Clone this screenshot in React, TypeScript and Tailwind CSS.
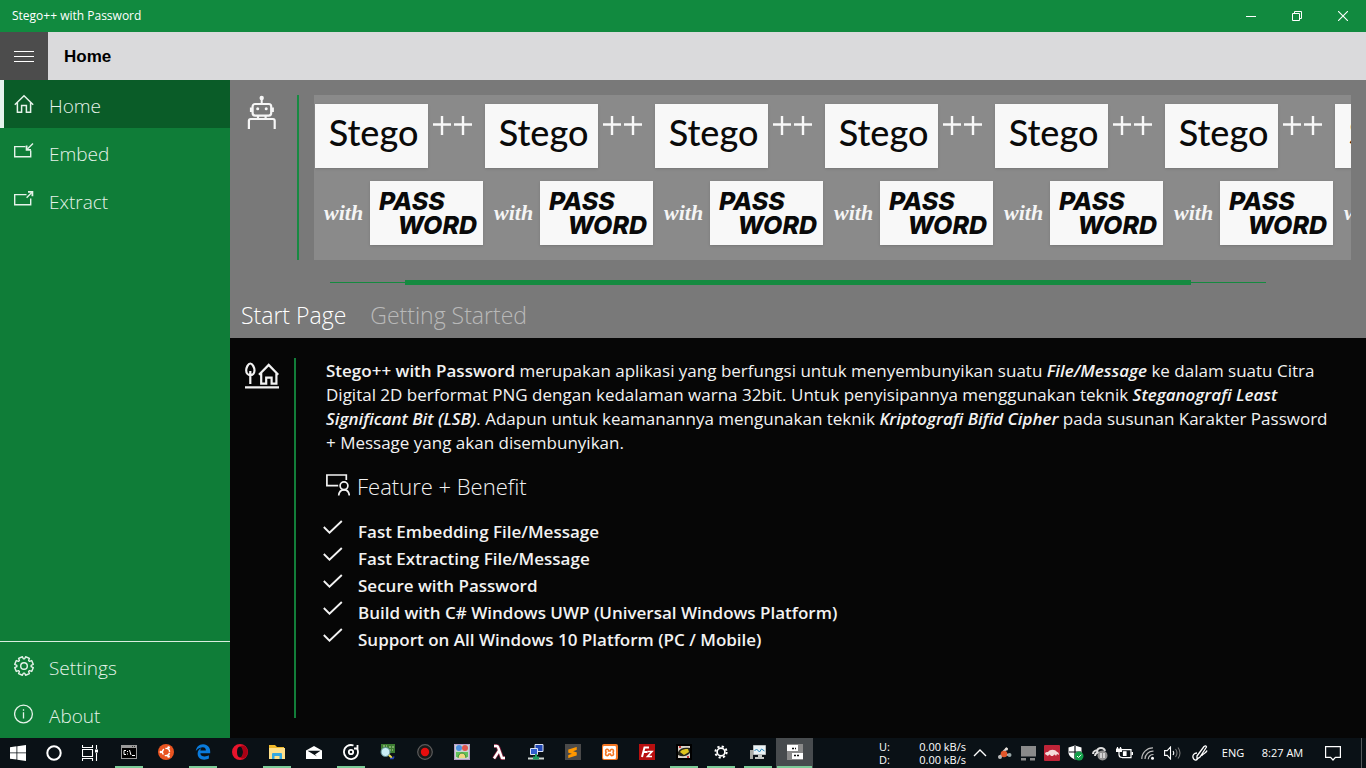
import React from "react";
import { SiXampp, SiSublimetext } from "react-icons/si";
import { FaEdgeLegacy } from "react-icons/fa6";

type IconProps = { children: React.ReactNode; w: number; h: number; sw?: number; className?: string };

function Icon({ children, w, h, sw = 1.3, className = "" }: IconProps) {
  return (
    <svg
      width={w}
      height={h}
      viewBox={`0 0 ${w} ${h}`}
      fill="none"
      stroke="currentColor"
      strokeWidth={sw}
      aria-hidden="true"
      className={`shrink-0 ${className}`}
    >
      {children}
    </svg>
  );
}

const HomeIcon = () => (
  <Icon w={20} h={20} sw={1.5}>
    <path d="M.8 10.700 10 1.700l9.200 9M3.400 8.500v9.800h4.200v-6.800h4.800v6.800h4.200V8.500" />
  </Icon>
);

const EmbedIcon = () => (
  <Icon w={20} h={20} sw={1.4}>
    <path d="M11.500 4.600H.7v10.200h16V8.500M19 1.500l-5.600 5.600" />
    <path d="M12.600 3.500v4.400H17" strokeWidth={1.8} />
  </Icon>
);

const ExtractIcon = () => (
  <Icon w={20} h={20} sw={1.4}>
    <path d="M12.500 4.600H.7v10.200h16V8.500M12.600 7.700 18 2.300" />
    <path d="M14 1.900h4.400v4.400" strokeWidth={1.8} />
  </Icon>
);

const SettingsIcon = () => {
  const teeth = 8;
  const pts: string[] = [];
  for (let i = 0; i < teeth; i++) {
    const a = (i * 2 * Math.PI) / teeth - Math.PI / 2 + Math.PI / 8;
    const seq: [number, number][] = [
      [-0.3, 7.2],
      [-0.22, 9.4],
      [0.22, 9.4],
      [0.3, 7.2],
    ];
    seq.forEach(([d, r]) => pts.push(`${(10 + r * Math.cos(a + d)).toFixed(2)},${(10 + r * Math.sin(a + d)).toFixed(2)}`));
  }
  return (
    <Icon w={20} h={20} sw={1.4}>
      <polygon points={pts.join(" ")} strokeLinejoin="round" />
      <circle cx="10" cy="10" r="3.3" />
    </Icon>
  );
};

const AboutIcon = () => (
  <Icon w={20} h={20} sw={1.3}>
    <circle cx="9.5" cy="10" r="8.9" />
    <path d="M9.500 8.200v6.300M9.500 5.200v1.600" />
  </Icon>
);

const RobotIcon = () => (
  <Icon w={30} h={34} sw={2.200} className="text-[#f6f6f6]">
    <circle cx="14.700" cy="3" r="2.200" fill="currentColor" stroke="none" />
    <path d="M14.700 4v5" strokeWidth={2} />
    <rect x="5.600" y="9" width="18.600" height="11.600" rx="2.500" />
    <path d="M4 12.500v4.600M25.800 12.500v4.600M11 21v3M18.600 21v3" />
    <circle cx="10.700" cy="13.700" r="1.500" fill="currentColor" stroke="none" />
    <circle cx="19.200" cy="13.700" r="1.500" fill="currentColor" stroke="none" />
    <path d="M1.900 34v-8.200q0-1.800 1.800-1.800h22.200q1.800 0 1.800 1.800V34" />
  </Icon>
);

const VillageIcon = () => (
  <Icon w={34} h={28} sw={2.200} className="text-[#f2f2f2]">
    <path d="M5.300 1.500C3.200 1.500 1.200 5.400 1.200 8.600c0 2.600 1.900 4.600 4.100 4.600s4.200-2 4.200-4.600c0-3.200-2.100-7.100-4.200-7.100ZM5.300 9v13" />
    <path d="m14 12.800 9.700-9.900 9.600 9.900M16.200 11v10.600h5V15.600h5.400v6h4.800V11" />
    <path d="M0 25.400h34" strokeWidth={2.4} />
  </Icon>
);

const FeatureIcon = () => (
  <Icon w={24} h={22} sw={1.7}>
    <path d="M20.300 6V1H.9v10.700h11.300" />
    <circle cx="18" cy="11.800" r="3.900" />
    <path d="M12.700 21.500c.3-3.300 2.200-5.700 5.300-5.700s5 2.400 5.300 5.700" />
  </Icon>
);

const CheckIcon = () => (
  <Icon w={20} h={14} sw={1.9}>
    <path d="m.8 7 5.700 5.700L18.800 1" />
  </Icon>
);

function NavItem({ icon, label, active = false }: { icon: React.ReactNode; label: string; active?: boolean }) {
  return (
    <a
      href="#"
      aria-current={active ? "page" : undefined}
      className={`flex h-12 items-center border-l-4 pl-[10px] text-[19px] font-[350] text-[#e6f3ea] ${
        active ? "border-[#e6f3ee] bg-[#0a5c28]" : "border-transparent"
      }`}
    >
      {icon}
      <span className="mt-1 ml-[15px]">{label}</span>
    </a>
  );
}

function LogoTile() {
  return (
    <div className="flex h-[165px] w-[170px] shrink-0 flex-col gap-[13px] pt-[9px]">
      <div className="flex h-16 gap-1 pl-px">
        <div className="flex w-[113px] shrink-0 items-center justify-center bg-[#f8f8f8] pb-2 pl-1 font-['Lato'] text-4xl leading-none font-medium text-[#0a0a0a] shadow-sm">
          Stego
        </div>
        <svg width="42" height="40" viewBox="0 0 42 40" stroke="#f8f8f8" strokeWidth="2.4" aria-label="++" className="shrink-0">
          <path d="M1 20.500h18M10 12v19M22 20.500h18M31 12v19" />
        </svg>
      </div>
      <div className="flex h-16 justify-end pr-px">
        <div className="flex w-[46px] items-center font-['Liberation_Serif'] text-[22px] leading-none font-bold text-[#f4f4f4] italic">
          with
        </div>
        <div className="flex w-[113px] shrink-0 flex-col justify-center bg-[#f8f8f8] pr-[6px] pl-[9px] font-['Inter'] text-[25px] leading-6 font-extrabold text-[#0a0a0a] italic shadow-sm">
          <span>PASS</span>
          <span className="text-right">WORD</span>
        </div>
      </div>
    </div>
  );
}

const features = [
  "Fast Embedding File/Message",
  "Fast Extracting File/Message",
  "Secure with Password",
  "Build with C# Windows UWP (Universal Windows Platform)",
  "Support on All Windows 10 Platform (PC / Mobile)",
];

const apps: { name: string; open?: boolean; active?: boolean; icon: React.ReactNode }[] = [
  {
    name: "Command Prompt",
    open: true,
    icon: (
      <svg width="16" height="14" viewBox="0 0 16 14">
        <rect width="16" height="14" fill="#9a9a9a" />
        <rect x="1" y="3" width="14" height="10" fill="#000" />
        <path d="M11 1.500h1M13 1.500h1" stroke="#333" />
        <path d="M5 5.500H3v4h2M6.500 6v1M6.500 8.500v1M8.500 5l1.500 5M11 10.500h3" stroke="#fff" fill="none" />
      </svg>
    ),
  },
  {
    name: "Ubuntu",
    icon: (
      <svg width="16" height="16" viewBox="0 0 16 16">
        <circle cx="8" cy="8" r="8" fill="#e95420" />
        <circle cx="8" cy="8" r="3.600" fill="none" stroke="#fff" strokeWidth="1.400" strokeDasharray="6 1.540" strokeDashoffset="-.8" />
        <circle cx="2.900" cy="8" r="1.300" fill="#fff" />
        <circle cx="10.600" cy="3.500" r="1.300" fill="#fff" />
        <circle cx="10.600" cy="12.500" r="1.300" fill="#fff" />
      </svg>
    ),
  },
  { name: "Edge", open: true, icon: <FaEdgeLegacy size={16} color="#0a7bdc" /> },
  {
    name: "Opera",
    icon: (
      <svg width="16" height="16" viewBox="0 0 16 16">
        <path fillRule="evenodd" fill="#e8142c" d="M8 0a8 8 0 1 0 0 16A8 8 0 0 0 8 0Zm0 2.500c1.900 0 3 2.400 3 5.500s-1.100 5.500-3 5.500S5 11.100 5 8s1.100-5.500 3-5.500Z" />
        <path fill="#a70014" d="M8 2.500C10 1 12.500 1.300 14 3.200A8 8 0 0 1 14 12.800c-1.500 1.900-4 2.200-6 .7 1.900 0 3-2.400 3-5.500S9.900 2.500 8 2.500Z" />
      </svg>
    ),
  },
  {
    name: "File Explorer",
    open: true,
    icon: (
      <svg width="16" height="14" viewBox="0 0 16 14">
        <path d="M0 0h6l2 2h7v3H0z" fill="#f0b92a" />
        <path d="M0 3h16v11H0z" fill="#ffe08a" />
        <path d="M3 14V9q0-1 1-1h8q1 0 1 1v5h-2.500v-3h-5v3z" fill="#35a8e0" />
      </svg>
    ),
  },
  {
    name: "Mail",
    icon: (
      <svg width="16" height="13" viewBox="0 0 16 13">
        <path d="M0 4.500 8 0l8 4.500V13H0z" fill="#fff" />
        <path d="M1.500 4.700h13L9 8.500l2 2z" fill="#0b1116" />
      </svg>
    ),
  },
  {
    name: "Groove Music",
    open: true,
    icon: (
      <svg width="16" height="16" viewBox="0 0 16 16" fill="none" stroke="#fff" strokeWidth="1.800">
        <path d="M14 4.500A7 7 0 1 1 10.500 1.500M14.500 1v3.500H11" />
        <circle cx="8" cy="8" r="2.200" />
      </svg>
    ),
  },
  {
    name: "System Viewer",
    icon: (
      <svg width="16" height="16" viewBox="0 0 16 16">
        <path d="M1 0h14v9H1z" fill="#3d7d32" />
        <path d="M3 2h4M9 3h5M9 6h4" stroke="#b9d59b" strokeDasharray="2 1" />
        <circle cx="5.500" cy="8" r="4.500" fill="#c9eef5" stroke="#5b8b92" />
        <path d="m9 11 3 3" stroke="#f0e04a" strokeWidth="2" />
        <path d="M10 14.500h3l1-2" stroke="#2946b8" strokeWidth="1.500" fill="none" />
      </svg>
    ),
  },
  {
    name: "Recorder",
    icon: (
      <svg width="16" height="16" viewBox="0 0 16 16">
        <circle cx="8" cy="8" r="7.300" fill="#1b1b1b" stroke="#5c5c5c" strokeWidth="1.200" />
        <circle cx="8" cy="8" r="4.200" fill="#e80d0d" />
      </svg>
    ),
  },
  {
    name: "Photo Tool",
    icon: (
      <svg width="16" height="16" viewBox="0 0 16 16">
        <path d="M0 0h16v16H0z" fill="#c9d5cf" />
        <circle cx="5" cy="4" r="3" fill="#4d8fe0" />
        <circle cx="11" cy="4" r="3" fill="#e0564d" />
        <path d="M2 8h12v5H2z" fill="#62c25a" />
        <path d="M4 14c0-3 2-5 4-5s4 2 4 5" fill="#f0d880" stroke="#3c8b3a" />
        <path d="M.5.5h15v15H.5z" fill="none" stroke="#b79ac9" />
      </svg>
    ),
  },
  {
    name: "Lambda",
    icon: (
      <svg width="16" height="16" viewBox="0 0 16 16" fill="none" strokeLinejoin="round">
        <path d="M3 2h2.500q1.200 0 1.700 1.500L11 14h3M7.800 7 3 14.500" stroke="#8a1f3d" strokeWidth="4" />
        <path d="M3 2h2.500q1.200 0 1.700 1.500L11 14h3M7.800 7 3 14.500" stroke="#fff" strokeWidth="2.400" />
      </svg>
    ),
  },
  {
    name: "Remote",
    icon: (
      <svg width="16" height="16" viewBox="0 0 16 16">
        <path d="M7 .5h8v7H7z" fill="#2148b5" stroke="#dbe3f5" />
        <path d="M2.500 4.500h7v6h-7z" fill="#2f5fd0" stroke="#dbe3f5" />
        <path d="M8 10v4" stroke="#1f9d62" strokeWidth="2" />
        <path d="M0 14.500h16" stroke="#cfd6d2" strokeWidth="2" />
        <path d="M5 14h6" stroke="#1f9d62" strokeWidth="3" />
      </svg>
    ),
  },
  {
    name: "Sublime Text",
    icon: (
      <span className="flex size-4 items-center justify-center bg-[#4a4a4a]">
        <SiSublimetext size={11} color="#ff9800" />
      </span>
    ),
  },
  {
    name: "XAMPP",
    icon: (
      <span className="flex size-4 items-center justify-center rounded-xs bg-[#f37623]">
        <SiXampp size={13} color="#fff" />
      </span>
    ),
  },
  {
    name: "FileZilla",
    icon: (
      <svg width="16" height="16" viewBox="0 0 16 16">
        <path d="M0 0h16v16H0z" fill="#b80f0f" />
        <path d="M3 13 5.500 3.500H10M4.500 8h4" stroke="#fff" strokeWidth="2" fill="none" />
        <path d="M8.500 7.500H13L8.500 12.500H13" stroke="#fff" strokeWidth="1.600" fill="none" />
      </svg>
    ),
  },
  {
    name: "Racing",
    open: true,
    icon: (
      <svg width="16" height="16" viewBox="0 0 16 16">
        <path d="M0 0h16v16H0z" fill="#000" />
        <path d="M2 2h12v12H2z" fill="#d9d2c8" />
        <path d="M2 8c2-4 6-5 12-4v5c-4 4-8 4-12 2z" fill="#25251b" />
        <path d="M4 8c2-3 5-3 8-3l1 3-5 3z" fill="#e0c51e" />
        <path d="M3 3h2M12 12v2" stroke="#c93434" strokeWidth="2" />
      </svg>
    ),
  },
  {
    name: "Settings",
    open: true,
    icon: (
      <svg width="14" height="14" viewBox="0 0 14 14" fill="none" stroke="#fff">
        <circle cx="7" cy="7" r="3.900" strokeWidth="1.700" />
        <circle cx="7" cy="7" r="5.600" strokeWidth="2" strokeDasharray="2.200 2.200" />
      </svg>
    ),
  },
  {
    name: "Resource Monitor",
    open: true,
    icon: (
      <svg width="16" height="15" viewBox="0 0 16 15">
        <path d="M0 5h3v9H0z" fill="#a8aaa5" />
        <path d="M3.500.5h12v9h-12z" fill="#e9f2f6" stroke="#b9bdbd" />
        <path d="m4.500 6 2-2 3 3 2-3 3 2" stroke="#2484b8" fill="none" />
        <path d="M8 10h4v2H8zM5 12h9v2H5z" fill="#c5c8c5" />
      </svg>
    ),
  },
  {
    name: "Stego++ with Password",
    open: true,
    active: true,
    icon: (
      <svg width="16" height="16" viewBox="0 0 16 16">
        <path d="M0 0h16v16H0z" fill="#8a8a8a" />
        <path d="M0 1h11v6H0zM5 9h11v6H5z" fill="#fff" />
        <path d="M5 4.500h4M7 11.500h6" stroke="#111" strokeDasharray="2 1" strokeWidth="1.500" />
      </svg>
    ),
  },
];

const tray: { name: string; icon: React.ReactNode }[] = [
  { name: "Show hidden icons", icon: <Icon w={14} h={8} sw={1.4}><path d="m1 7 6-6 6 6" /></Icon> },
  {
    name: "Helper",
    icon: (
      <svg width="15" height="13" viewBox="0 0 15 13">
        <path d="m6 5 4-4M2 10l4-3 6 1" stroke="#d0d0d0" strokeWidth="2" />
        <circle cx="7" cy="7" r="3.300" fill="#e2572b" />
        <circle cx="3" cy="10" r="2" fill="#b9b9b9" />
        <circle cx="12.500" cy="8" r="2" fill="#98a6a6" />
        <circle cx="9.500" cy="2" r="1.500" fill="#e7e0da" />
      </svg>
    ),
  },
  {
    name: "Devices",
    icon: (
      <svg width="15" height="15" viewBox="0 0 15 15" fill="#8a8a8a">
        <path d="M0 0h15v10.500H0zM0 12h5v2.500H0zM9 12h5v2.500H9z" />
      </svg>
    ),
  },
  {
    name: "Game bar",
    icon: (
      <svg width="16" height="16" viewBox="0 0 16 16">
        <rect width="16" height="16" rx="1" fill="#bf2438" />
        <path d="M1 9c0-2 2-2 3-2 2-3 7-3 9 0 1 0 2 1 2 3l-2-1-1 2c-1-2-2-2-3 0H7c-1-2-2-2-3 0z" fill="#f4dada" />
      </svg>
    ),
  },
  {
    name: "Security",
    icon: (
      <svg width="16" height="16" viewBox="0 0 16 16">
        <path d="M7 .5 13.500 2.500v5c0 3.500-3 5.500-6.500 7-3.500-1.500-6.500-3.500-6.500-7v-5z" fill="#fff" />
        <path d="M7 1v13M1 7h12" stroke="#0b1116" strokeWidth="1.200" />
        <circle cx="11" cy="11" r="4.500" fill="#13a04a" />
        <path d="m9 11 1.500 1.500L13.200 9.700" stroke="#fff" fill="none" />
      </svg>
    ),
  },
  {
    name: "Cloud sync",
    icon: (
      <svg width="16" height="15" viewBox="0 0 16 15">
        <path d="M1 8c0-3 3-4 4-3 1-4 7-4 8 0M3 10c0-3 3-4 5-3" stroke="#dedede" strokeWidth="2" fill="none" />
        <circle cx="10.500" cy="9.500" r="5" fill="#8f8f8f" />
        <path d="M9 7v5M12 7v5" stroke="#fff" strokeWidth="1.200" />
      </svg>
    ),
  },
  {
    name: "Battery",
    icon: (
      <Icon w={17} h={14} sw={1.2}>
        <path d="M6 3.600h9v8H6M16.400 6v3M3 5.500v3c0 2 1 3 3 3" />
        <path d="M1.500 1v2M4.500 1v2" />
        <path d="M.6 3h4.800v2.500H.6zM7.500 5.800H10v3.600H7.500z" fill="currentColor" />
      </Icon>
    ),
  },
  {
    name: "Wi-Fi",
    icon: (
      <Icon w={14} h={13} sw={1.2}>
        <path d="M.8 12A11 11 0 0 1 12 .9M4 12A8 8 0 0 1 12.500 4.200M7.200 12.200A5 5 0 0 1 12.500 7.500" className="text-[#b8b8b8]" />
        <circle cx="11.500" cy="11.300" r="1.500" fill="currentColor" stroke="none" />
      </Icon>
    ),
  },
  {
    name: "Volume",
    icon: (
      <Icon w={17} h={14} sw={1.1}>
        <path d="M.6 4.600h2.600L6.500 1v12L3.200 9.400H.6zM9 5q1.500 2 0 4" />
        <path d="M11.500 3q3 4 0 8M14 1.500q4 5.500 0 11" stroke="#777" />
      </Icon>
    ),
  },
];

function TaskButton({ name, open, active, icon }: { name: string; open?: boolean; active?: boolean; icon: React.ReactNode }) {
  return (
    <button
      aria-label={name}
      className={`flex w-[37px] shrink-0 flex-col items-center border-x border-transparent ${active ? "bg-[#474b4e]" : ""}`}
    >
      <span className="flex flex-1 items-center justify-center">{icon}</span>
      <span className={`h-[2px] ${active ? "w-full" : "w-7"} ${open ? "bg-[#7ccb98]" : "bg-transparent"}`} />
    </button>
  );
}

export default function App() {
  return (
    <div className="flex min-h-screen flex-col bg-[#060606] font-['Open_Sans','Noto_Sans',sans-serif] text-[#f2f2f2]">
      <header>
        <div className="flex h-8 items-center justify-between bg-[#118a3f] text-white">
          <span className="pl-3 text-xs">Stego++ with Password</span>
          <div className="flex h-8">
            <button aria-label="Minimize" className="flex w-[46px] items-center justify-center">
              <Icon w={10} h={10} sw={1}><path d="M0 5.500h10" /></Icon>
            </button>
            <button aria-label="Restore" className="flex w-[46px] items-center justify-center">
              <Icon w={10} h={10} sw={1}><path d="M.5 2.500h7v7h-7zM2.500 2.500v-2h7v7h-2" /></Icon>
            </button>
            <button aria-label="Close" className="flex w-[46px] items-center justify-center">
              <Icon w={10} h={10} sw={1.1}><path d="m0 0 10 10M10 0 0 10" /></Icon>
            </button>
          </div>
        </div>
        <div className="flex h-12 items-center bg-[#dadadc]">
          <button aria-label="Toggle menu" className="flex size-12 items-center justify-center bg-[#4c4c4c] text-white">
            <Icon w={20} h={12} sw={1}><path d="M0 1.500h20M0 6.500h20M0 11.500h20" /></Icon>
          </button>
          <h1 className="pt-px pl-4 font-['Liberation_Sans'] text-[17px] font-bold text-black">Home</h1>
        </div>
      </header>

      <div className="flex flex-1">
        <nav className="flex w-[230px] shrink-0 flex-col justify-between bg-[#0f7d38]">
          <div>
            <NavItem icon={<HomeIcon />} label="Home" active />
            <NavItem icon={<EmbedIcon />} label="Embed" />
            <NavItem icon={<ExtractIcon />} label="Extract" />
          </div>
          <div className="border-t border-[#d9eedf]">
            <NavItem icon={<SettingsIcon />} label="Settings" />
            <NavItem icon={<AboutIcon />} label="About" />
          </div>
        </nav>

        <main className="flex min-w-0 flex-1 flex-col">
          <section className="bg-[#797979] pt-[15px]">
            <div className="flex pr-[15px]">
              <div className="w-[67px] shrink-0 pl-[17px]">
                <RobotIcon />
              </div>
              <div className="w-[2px] shrink-0 bg-[#188a42]" />
              <div className="ml-[15px] flex min-w-0 flex-1 overflow-hidden bg-[#8a8a8a]">
                {[0, 1, 2, 3, 4, 5, 6].map((i) => (
                  <LogoTile key={i} />
                ))}
              </div>
            </div>
            <div className="mt-5 mr-[100px] ml-[100px] flex h-[5px] items-center">
              <div className="h-px w-[75px] bg-[#158a40]" />
              <div className="h-[5px] flex-1 bg-[#158a40]" />
              <div className="h-px w-[75px] bg-[#158a40]" />
            </div>
            <div role="tablist" className="flex h-[53px] items-center gap-6 pt-2 pl-[11px] text-[23px] font-[350]">
              <button role="tab" aria-selected="true" className="text-white">Start Page</button>
              <button role="tab" aria-selected="false" className="text-[#b9b9b9]">Getting Started</button>
            </div>
          </section>

          <section className="flex flex-1 py-5 pr-6">
            <div className="w-16 shrink-0 pt-1 pl-[15px]">
              <VillageIcon />
            </div>
            <div className="w-[2px] shrink-0 bg-[#127d39]" />
            <div className="min-w-0 flex-1 pl-[30px]">
              <p className="pt-px pr-2 text-[17px] leading-6">
                <b className="font-semibold">Stego++ with Password</b> merupakan aplikasi yang berfungsi untuk menyembunyikan suatu{" "}
                <b className="font-semibold italic">File/Message</b> ke dalam suatu Citra Digital 2D berformat PNG dengan
                kedalaman warna 32bit. Untuk penyisipannya menggunakan teknik{" "}
                <b className="font-semibold italic">Steganografi Least Significant Bit (LSB)</b>. Adapun untuk keamanannya
                mengunakan teknik <b className="font-semibold italic">Kriptografi Bifid Cipher</b> pada susunan Karakter
                Password + Message yang akan disembunyikan.
              </p>
              <h2 className="mt-[19px] flex h-8 gap-[7px] text-[22px] leading-6 font-[350]">
                <FeatureIcon />
                <span>Feature + Benefit</span>
              </h2>
              <ul className="mt-3 text-[17px] leading-[27px] font-semibold">
                {features.map((f) => (
                  <li key={f} className="-ml-[3px] flex gap-[15px]">
                    <span className="pt-[2px]">
                      <CheckIcon />
                    </span>
                    {f}
                  </li>
                ))}
              </ul>
            </div>
          </section>
        </main>
      </div>

      <footer className="flex h-[30px] bg-[#0a1116] text-white">
        <button aria-label="Start" className="flex w-9 shrink-0 items-center justify-center">
          <svg width="16" height="16" viewBox="0 0 16 16" fill="#fff">
            <path d="M0 2.200 6.500 1.300v6.200H0zM7.300 1.200 16 0v7.500H7.300zM0 8.300h6.500v6.300L0 13.700zM7.300 8.300H16V16l-8.700-1.200z" />
          </svg>
        </button>
        <button aria-label="Cortana" className="flex w-9 shrink-0 items-center justify-center">
          <Icon w={16} h={16} sw={2}><circle cx="8" cy="8" r="6.700" /></Icon>
        </button>
        <button aria-label="Task view" className="flex w-9 shrink-0 items-center justify-center">
          <Icon w={16} h={16} sw={1.1}>
            <path d="M.5 0v2.500h10V0M.5 4.500h10v7H.5zM.5 16v-2.500h10V16M14.500 0v4M14.500 8v8" />
            <path d="M13 4.500h3v3h-3z" fill="currentColor" stroke="none" />
          </Icon>
        </button>
        <div className="flex pl-[2px]">
          {apps.map((a) => (
            <TaskButton key={a.name} {...a} />
          ))}
        </div>
        <div className="ml-auto flex items-center text-[11px] whitespace-nowrap">
          <div className="flex w-[89px] justify-between pr-[2px] leading-[13px]">
            <span>U:<br />D:</span>
            <span>0.00 kB/s<br />0.00 kB/s</span>
          </div>
          {tray.map((t) => (
            <button key={t.name} aria-label={t.name} className="flex w-6 justify-center">
              {t.icon}
            </button>
          ))}
          <button aria-label="Windows Ink" className="flex w-8 justify-center">
            <Icon w={16} h={16} sw={1.3}>
              <path d="M5 11 12 1.500q2-1.500 2.500.5L8 12l-3 2zM5 8c-3 0-4.500 2-4 4.500S4 16 5.500 14M9.500 11c2-3 5-3 5.500-5.500" />
            </Icon>
          </button>
          <span className="w-[34px] text-center">ENG</span>
          <span className="w-[65px] text-center">8:27 AM</span>
          <button aria-label="Action center" className="flex w-9 justify-center">
            <Icon w={16} h={16} sw={1.2}><path d="M.6 1.600h14.800v10.800h-5L8 15l-2.400-2.600h-5z" /></Icon>
          </button>
          <span className="mr-1 ml-[10px] h-[30px] w-px bg-[#55595c]" />
        </div>
      </footer>
    </div>
  );
}
